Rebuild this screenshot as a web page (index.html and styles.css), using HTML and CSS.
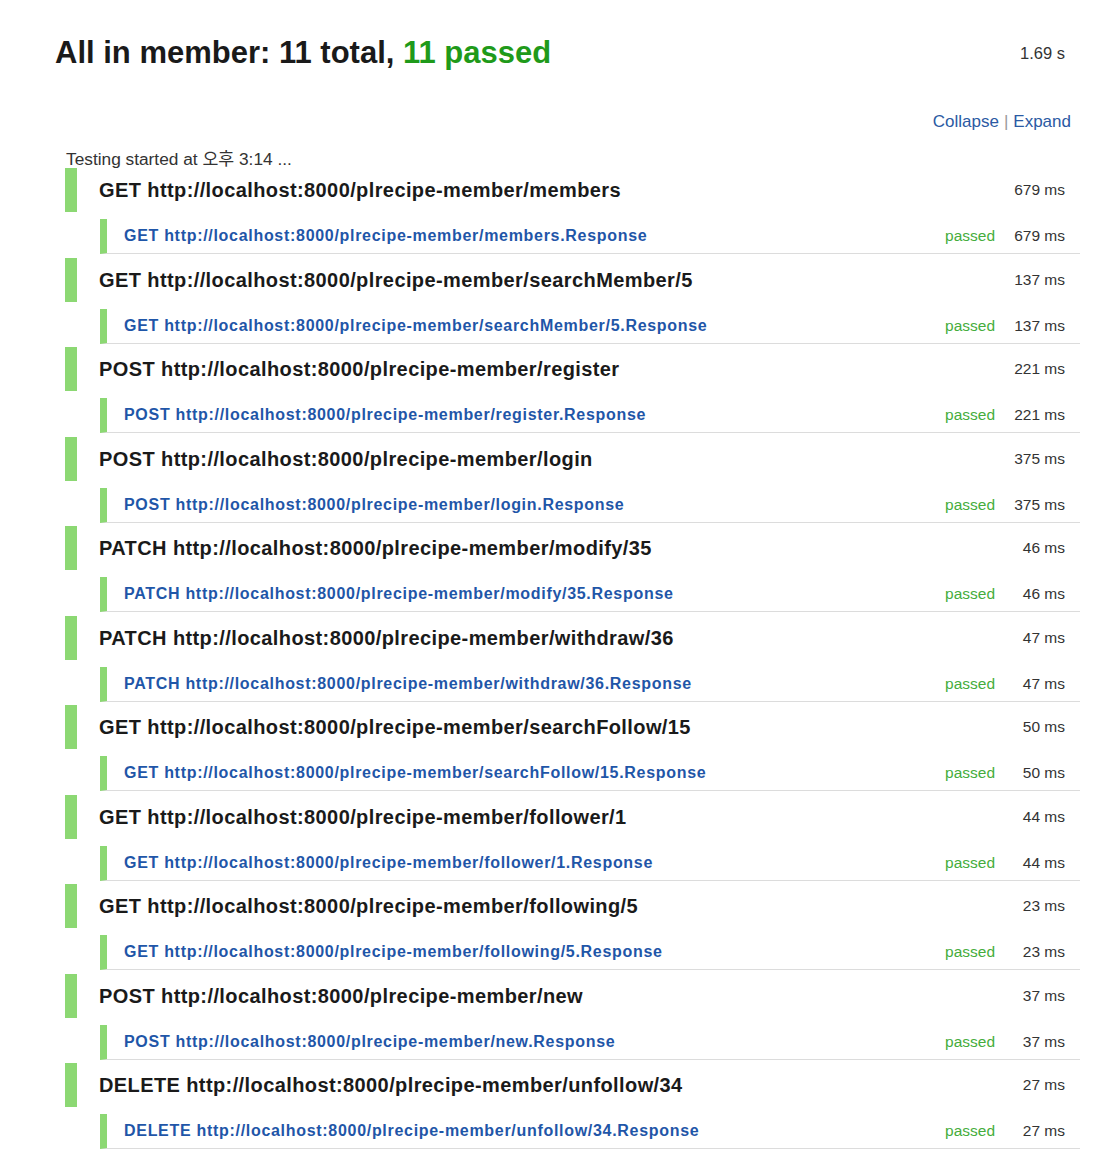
FILE: index.html
```html
<!DOCTYPE html>
<html>
<head>
<meta charset="utf-8">
<link rel="stylesheet" href="styles.css">
</head>
<body>
<div class="page">
  <div class="header">
    <h1 class="title">All in member: 11 total, <span class="ok">11 passed</span></h1>
    <span class="total-time">1.69 s</span>
  </div>
  <div class="toolbar"><a class="lnk" href="#">Collapse</a><span class="sep">|</span><a class="lnk" href="#">Expand</a></div>
  <div class="started">Testing started at 오후 3:14 ...</div>

  <div class="suite">
    <div class="suite-head"><span class="name"><b>GET</b> http://localhost:8000/plrecipe-member/members</span><span class="time">679 ms</span></div>
    <div class="test"><span class="tname"><b>GET</b> http://localhost:8000/plrecipe-member/members.Response</span><span class="status">passed</span><span class="time">679 ms</span></div>
  </div>
  <div class="suite">
    <div class="suite-head"><span class="name"><b>GET</b> http://localhost:8000/plrecipe-member/searchMember/5</span><span class="time">137 ms</span></div>
    <div class="test"><span class="tname"><b>GET</b> http://localhost:8000/plrecipe-member/searchMember/5.Response</span><span class="status">passed</span><span class="time">137 ms</span></div>
  </div>
  <div class="suite">
    <div class="suite-head"><span class="name"><b>POST</b> http://localhost:8000/plrecipe-member/register</span><span class="time">221 ms</span></div>
    <div class="test"><span class="tname"><b>POST</b> http://localhost:8000/plrecipe-member/register.Response</span><span class="status">passed</span><span class="time">221 ms</span></div>
  </div>
  <div class="suite">
    <div class="suite-head"><span class="name"><b>POST</b> http://localhost:8000/plrecipe-member/login</span><span class="time">375 ms</span></div>
    <div class="test"><span class="tname"><b>POST</b> http://localhost:8000/plrecipe-member/login.Response</span><span class="status">passed</span><span class="time">375 ms</span></div>
  </div>
  <div class="suite">
    <div class="suite-head"><span class="name"><b>PATCH</b> http://localhost:8000/plrecipe-member/modify/35</span><span class="time">46 ms</span></div>
    <div class="test"><span class="tname"><b>PATCH</b> http://localhost:8000/plrecipe-member/modify/35.Response</span><span class="status">passed</span><span class="time">46 ms</span></div>
  </div>
  <div class="suite">
    <div class="suite-head"><span class="name"><b>PATCH</b> http://localhost:8000/plrecipe-member/withdraw/36</span><span class="time">47 ms</span></div>
    <div class="test"><span class="tname"><b>PATCH</b> http://localhost:8000/plrecipe-member/withdraw/36.Response</span><span class="status">passed</span><span class="time">47 ms</span></div>
  </div>
  <div class="suite">
    <div class="suite-head"><span class="name"><b>GET</b> http://localhost:8000/plrecipe-member/searchFollow/15</span><span class="time">50 ms</span></div>
    <div class="test"><span class="tname"><b>GET</b> http://localhost:8000/plrecipe-member/searchFollow/15.Response</span><span class="status">passed</span><span class="time">50 ms</span></div>
  </div>
  <div class="suite">
    <div class="suite-head"><span class="name"><b>GET</b> http://localhost:8000/plrecipe-member/follower/1</span><span class="time">44 ms</span></div>
    <div class="test"><span class="tname"><b>GET</b> http://localhost:8000/plrecipe-member/follower/1.Response</span><span class="status">passed</span><span class="time">44 ms</span></div>
  </div>
  <div class="suite">
    <div class="suite-head"><span class="name"><b>GET</b> http://localhost:8000/plrecipe-member/following/5</span><span class="time">23 ms</span></div>
    <div class="test"><span class="tname"><b>GET</b> http://localhost:8000/plrecipe-member/following/5.Response</span><span class="status">passed</span><span class="time">23 ms</span></div>
  </div>
  <div class="suite">
    <div class="suite-head"><span class="name"><b>POST</b> http://localhost:8000/plrecipe-member/new</span><span class="time">37 ms</span></div>
    <div class="test"><span class="tname"><b>POST</b> http://localhost:8000/plrecipe-member/new.Response</span><span class="status">passed</span><span class="time">37 ms</span></div>
  </div>
  <div class="suite">
    <div class="suite-head"><span class="name"><b>DELETE</b> http://localhost:8000/plrecipe-member/unfollow/34</span><span class="time">27 ms</span></div>
    <div class="test"><span class="tname"><b>DELETE</b> http://localhost:8000/plrecipe-member/unfollow/34.Response</span><span class="status">passed</span><span class="time">27 ms</span></div>
  </div>
</div>
</body>
</html>
```

FILE: styles.css
```css
html, body {
  margin: 0;
  padding: 0;
  background: #ffffff;
}
body {
  font-family: "Liberation Sans", Arial, "Noto Sans CJK KR", sans-serif;
  color: #222;
}
.page {
  width: 1098px;
  box-sizing: border-box;
  padding: 0 18px 0 0;
}
.header {
  display: flex;
  align-items: center;
  justify-content: space-between;
  padding: 33px 15px 0 55px;
  height: 40px;
}
.title {
  margin: 0;
  font-size: 31px;
  font-weight: bold;
  color: #1a1a1a;
  line-height: 40px;
}
.ok {
  color: #1f9a1a;
}
.total-time {
  font-size: 16.5px;
  color: #333;
}
.toolbar {
  display: flex;
  justify-content: flex-end;
  align-items: center;
  margin-top: 39px;
  padding-right: 9px;
  height: 20px;
  font-size: 17px;
}
.lnk {
  color: #2b5aa3;
  text-decoration: none;
}
.sep {
  color: #999;
  margin: 0 5px;
}
.started {
  margin: 18px 0 0 66px;
  height: 18px;
  line-height: 18px;
  font-size: 17.3px;
  color: #333;
}
.suite {
  margin: 0 0 3.5px 65px;
}
.started + .suite {
  margin-top: 0;
}
.suite-head {
  display: flex;
  align-items: center;
  height: 44px;
  border-left: 12px solid #8cd873;
  padding: 0 15px 0 22px;
}
.name {
  flex: 1;
  font-size: 20px;
  font-weight: bold;
  letter-spacing: 0.4px;
  color: #1a1a1a;
  padding-top: 1px;
}
.name b {
  font-weight: bold;
}
.time {
  width: 60px;
  text-align: right;
  font-size: 15.5px;
  color: #333;
}
.test {
  display: flex;
  align-items: center;
  margin: 7px 0 0 35px;
  height: 34px;
  border-left: 7px solid #8cd873;
  border-bottom: 1px solid #dcdcdc;
  padding: 0 15px 0 17px;
}
.tname {
  flex: 1;
  font-size: 16px;
  font-weight: bold;
  letter-spacing: 0.7px;
  color: #1f56a8;
}
.status {
  font-size: 15.5px;
  color: #45ad3c;
  margin-right: 10px;
}
```
